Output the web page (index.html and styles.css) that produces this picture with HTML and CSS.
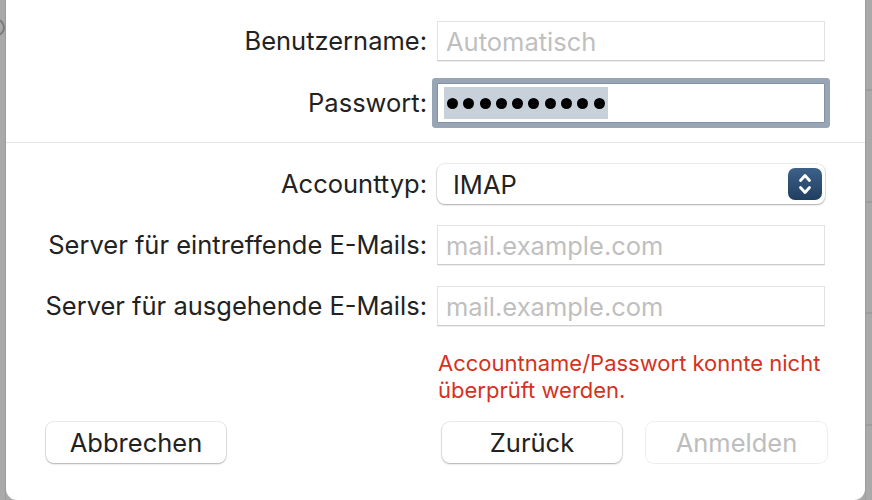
FILE: index.html
```html
<!DOCTYPE html>
<html lang="de">
<head>
<meta charset="utf-8">
<title>Account hinzufügen</title>
<link rel="stylesheet" href="styles.css">
</head>
<body>
<div class="desk">
  <div class="strip strip-left"><span class="ghost-ring"></span></div>
  <div class="sheet">
    <section class="form form-top">
      <label class="label">Benutzername:</label>
      <div class="field"><span class="placeholder">Automatisch</span></div>
      <label class="label">Passwort:</label>
      <div class="field field-focus">
        <span class="selection" aria-label="Passwort">
          <i class="dot"></i><i class="dot"></i><i class="dot"></i><i class="dot"></i><i class="dot"></i><i class="dot"></i><i class="dot"></i><i class="dot"></i><i class="dot"></i><i class="dot"></i>
        </span>
      </div>
    </section>
    <div class="divider"></div>
    <section class="form form-server">
      <label class="label">Accounttyp:</label>
      <div class="popup">
        <span class="popup-value">IMAP</span>
        <span class="stepper">
          <svg width="34" height="32" viewBox="0 0 34 32"><polyline points="12.5,12.5 17,7.5 21.5,12.5" fill="none" stroke="#fff" stroke-width="2.8" stroke-linecap="round" stroke-linejoin="round"/><polyline points="12.5,19.5 17,24.5 21.5,19.5" fill="none" stroke="#fff" stroke-width="2.8" stroke-linecap="round" stroke-linejoin="round"/></svg>
        </span>
      </div>
      <label class="label">Server für eintreffende E-Mails:</label>
      <div class="field"><span class="placeholder">mail.example.com</span></div>
      <label class="label">Server für ausgehende E-Mails:</label>
      <div class="field"><span class="placeholder">mail.example.com</span></div>
      <span class="label"></span>
      <p class="error">Accountname/Passwort konnte nicht überprüft werden.</p>
    </section>
    <footer class="actions">
      <button class="btn">Abbrechen</button>
      <div class="actions-right">
        <button class="btn">Zurück</button>
        <button class="btn btn-disabled">Anmelden</button>
      </div>
    </footer>
  </div>
  <div class="strip strip-right"></div>
</div>
</body>
</html>
```
FILE: styles.css
```css
html, body {
  margin: 0;
  padding: 0;
  width: 872px;
  height: 500px;
  overflow: hidden;
  background: #a9a9a9;
  font-family: "Inter", "Liberation Sans", sans-serif;
  color: #222222;
}

.desk {
  display: flex;
  width: 872px;
  height: 500px;
}

.strip {
  position: relative;
  overflow: hidden;
  height: 500px;
  background: #a9a9a9;
}

.strip-left {
  width: 6px;
  box-shadow: inset -1px 0 0 #9c9c9c;
}

.ghost-ring {
  position: absolute;
  left: -11px;
  top: 19px;
  width: 12px;
  height: 13px;
  border: 2px solid #7c7c7c;
  border-radius: 50%;
}

.strip-right {
  width: 7px;
  box-shadow: inset 1px 0 0 #9c9c9c;
  background:
    linear-gradient(#9d9d9d, #9d9d9d) 0 89px / 100% 2px no-repeat,
    linear-gradient(#9d9d9d, #9d9d9d) 0 201px / 100% 2px no-repeat,
    linear-gradient(#9d9d9d, #9d9d9d) 0 312px / 100% 2px no-repeat,
    linear-gradient(#9d9d9d, #9d9d9d) 0 424px / 100% 2px no-repeat,
    #a9a9a9;
}

.sheet {
  width: 859px;
  height: 500px;
  box-sizing: border-box;
  background: #ffffff;
  border-radius: 0 0 11px 11px;
  padding-top: 21px;
}

.form {
  display: grid;
  grid-template-columns: 421px 388px;
  column-gap: 10px;
  row-gap: 22px;
  align-items: center;
}

.form-server {
  row-gap: 21px;
  margin-top: 21px;
}

.label {
  text-align: right;
  font-size: 25.5px;
  line-height: 30px;
  white-space: nowrap;
}

.field {
  height: 40px;
  box-sizing: border-box;
  border: 1px solid #e2e2e2;
  border-bottom-color: #cdcdcd;
  box-shadow: 0 1px 0 #eeeeee;
  display: flex;
  align-items: center;
  padding-left: 8px;
  background: #fff;
}

.placeholder {
  font-size: 25.5px;
  color: #bfbfbf;
  white-space: nowrap;
}

.field-focus {
  border: 1px solid #7f91a3;
  box-shadow: 0 0 0 5px #97a5b4;
  border-radius: 1px;
  padding-left: 6px;
}

.selection {
  display: flex;
  align-items: center;
  gap: 5.3px;
  height: 32px;
  padding: 0 3px 0 3px;
  background: #c8d1da;
}

.dot {
  display: block;
  width: 11px;
  height: 11px;
  border-radius: 50%;
  background: #000;
}

.divider {
  height: 1px;
  margin-top: 19px;
  background: #e5e5e5;
}

.popup {
  height: 40px;
  box-sizing: border-box;
  border-radius: 8px;
  background: #fff;
  box-shadow: 0 0 0 1px rgba(0, 0, 0, 0.07), 0 1px 2px rgba(0, 0, 0, 0.28);
  display: flex;
  align-items: center;
  justify-content: space-between;
  padding: 0 3px 0 16px;
}

.popup-value {
  font-size: 25.5px;
}

.stepper {
  display: flex;
  width: 34px;
  height: 32px;
  border-radius: 7px;
  background: linear-gradient(#3d6189, #203e60);
}

.error {
  grid-column: 2;
  margin: 3px 0 0 0;
  font-size: 22px;
  line-height: 27px;
  color: #d6311e;
  padding-left: 1px;
}

.actions {
  display: flex;
  justify-content: space-between;
  padding: 0 38px 0 40px;
  margin-top: 18px;
}

.actions-right {
  display: flex;
  gap: 24px;
}

.btn {
  width: 180px;
  height: 41px;
  border: 0;
  border-radius: 8px;
  background: #fff;
  box-shadow: 0 0 0 1px rgba(0, 0, 0, 0.08), 0 1px 2px rgba(0, 0, 0, 0.26);
  font-family: inherit;
  font-size: 25.5px;
  color: #222222;
  padding: 0;
}

.btn-disabled {
  width: 181px;
  color: #bdbdbd;
  box-shadow: 0 0 0 1px rgba(0, 0, 0, 0.07);
}
```
